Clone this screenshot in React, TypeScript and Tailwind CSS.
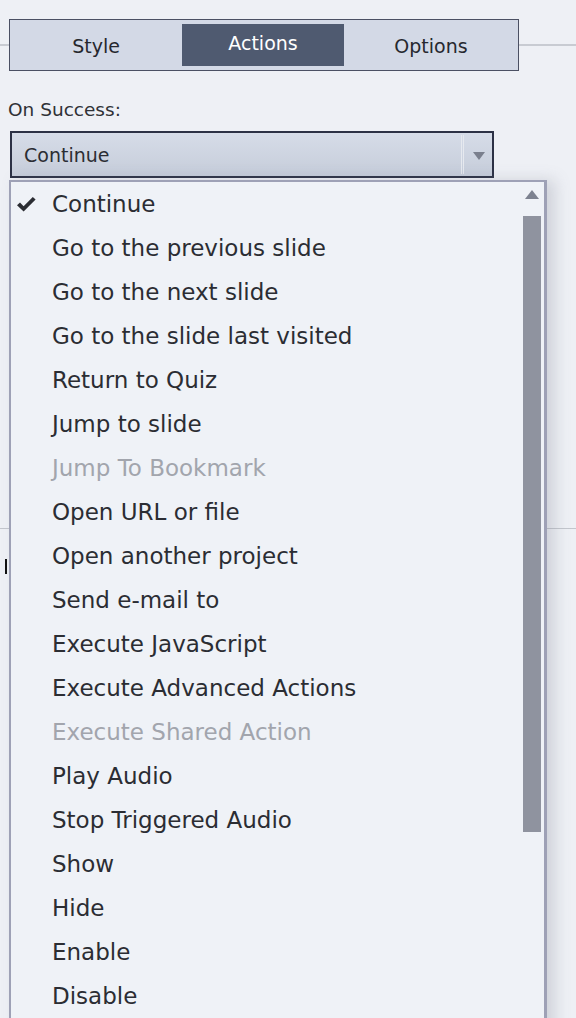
import React from "react";

const items: { label: string; disabled?: boolean; checked?: boolean }[] = [
  { label: "Continue", checked: true },
  { label: "Go to the previous slide" },
  { label: "Go to the next slide" },
  { label: "Go to the slide last visited" },
  { label: "Return to Quiz" },
  { label: "Jump to slide" },
  { label: "Jump To Bookmark", disabled: true },
  { label: "Open URL or file" },
  { label: "Open another project" },
  { label: "Send e-mail to" },
  { label: "Execute JavaScript" },
  { label: "Execute Advanced Actions" },
  { label: "Execute Shared Action", disabled: true },
  { label: "Play Audio" },
  { label: "Stop Triggered Audio" },
  { label: "Show" },
  { label: "Hide" },
  { label: "Enable" },
  { label: "Disable" },
];

export default function App() {
  return (
    <div
      className="relative w-[576px] h-[1018px] overflow-hidden bg-[#eef0f5] text-[#2b2d33]"
      style={{ fontFamily: '"DejaVu Sans", "Open Sans", sans-serif' }}
    >
      {/* Tab bar row */}
      <div className="flex items-center pt-[19px]">
        <div className="w-[9px] h-[2px] bg-[#c8cbd2]" />
        <div className="w-[510px] h-[52px] border border-[#4b5063] bg-[#d3d9e6] grid grid-cols-[172px_162px_1fr] py-[4px]">
          <div className="flex items-center justify-center text-[19px] pt-[2px] text-[#26282e]">Style</div>
          <div className="flex items-center justify-center bg-[#4f5a70] text-white text-[19px] pb-[4px]">Actions</div>
          <div className="flex items-center justify-center text-[19px] pt-[2px] text-[#26282e]">Options</div>
        </div>
        <div className="flex-1 h-[2px] bg-[#c8cbd2]" />
      </div>

      {/* Label */}
      <div className="pl-[8px] pt-[28px] text-[18.5px] leading-[22px] text-[#2f3136]">On Success:</div>

      {/* Select */}
      <div className="ml-[10px] mt-[10px] w-[484px] h-[47px] border-2 border-[#2c3145] bg-gradient-to-b from-[#d6dce8] to-[#c6cdda] flex items-center">
        <div className="flex-1 pl-[12px] text-[19px] pt-[1px] text-[#2b2d33]">Continue</div>
        <div className="w-[4px] h-full flex gap-[1px] py-[2px]">
          <div className="w-px bg-[#e6e9ef]" />
          <div className="w-px bg-[#e6e9ef]" />
        </div>
        <div className="w-[27px] flex items-center justify-center pt-[2px]">
          <svg width="14" height="10" viewBox="0 0 14 10">
            <path d="M1 1 L13 1 L7 9 Z" fill="#7a7f8d" />
          </svg>
        </div>
      </div>

      {/* Underlying panel content */}
      <div className="mt-[350px] flex items-center">
        <div className="w-[9px] h-[1px] bg-[#c3c6cd]" />
        <div className="flex-1" />
        <div className="w-[30px] h-[1px] bg-[#c3c6cd]" />
      </div>
      <div className="ml-[5px] mt-[30px] w-[2px] h-[15px] bg-[#111]" />

      {/* Dropdown popup */}
      <div className="absolute left-[9px] top-[180px] w-[538px] h-[860px] bg-[#eff2f7] border-l-2 border-t-2 border-r-[3px] border-[#9ea1b6] shadow-[8px_0_14px_rgba(120,125,140,0.25)]">
        <div className="flex">
          <div className="flex-1">
            {items.map((it) => (
              <div
                key={it.label}
                className={`h-[44px] flex items-center text-[23px] ${it.disabled ? "text-[#a2a5ad]" : "text-[#2b2d33]"}`}
              >
                <div className="w-[41px] flex items-center justify-start pl-[6px]">
                  {it.checked ? (
                    <svg width="19" height="15" viewBox="0 0 19 15">
                      <path d="M0 8.2 L3 5.6 L6.6 9.2 L15.8 0 L18.6 2.6 L6.6 14.6 Z" fill="#2b2d33" />
                    </svg>
                  ) : null}
                </div>
                <span>{it.label}</span>
              </div>
            ))}
          </div>
          <div className="w-[18px] mr-[3px] flex flex-col items-center">
            <svg className="mt-[8px]" width="14" height="9" viewBox="0 0 14 9">
              <path d="M7 0 L14 9 L0 9 Z" fill="#7d8290" />
            </svg>
            <div className="mt-[17px] w-[18px] h-[616px] bg-[#8f939f]" />
          </div>
        </div>
      </div>
    </div>
  );
}
